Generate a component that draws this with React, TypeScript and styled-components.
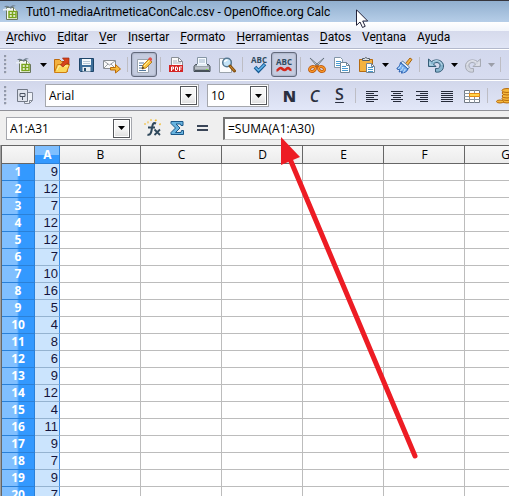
import React from 'react';
import styled, { createGlobalStyle, css } from 'styled-components';

const GlobalStyle = createGlobalStyle`
  *, *::before, *::after { box-sizing: border-box; }
  html, body { margin: 0; }
  body { font-family: "Open Sans", "Noto Sans", sans-serif; font-size: 12px; color: #000; }
  button, input, select { font: inherit; color: inherit; margin: 0; }
`;

const Window = styled.div`
  position: relative;
  display: flex;
  flex-direction: column;
  height: 100vh;
  overflow: hidden;
  background: #efefef;
`;

const TitleBar = styled.header`
  display: flex;
  flex: none;
  align-items: center;
  gap: 5px;
  height: 22px;
  padding-left: 3px;
  border-top: 1px solid #35353c;
  background: linear-gradient(#91afcf, #b6cee8);
`;

const Title = styled.h1`
  margin: 0;
  font-family: Roboto, sans-serif;
  font-size: 12px;
  line-height: 20px;
  font-weight: 400;
  white-space: nowrap;
`;

const MenuBar = styled.nav`
  display: flex;
  flex: none;
  gap: 11px;
  height: 27px;
  padding: 4px 6px 0;
  border-bottom: 1px solid #b3b9cc;
  background: linear-gradient(#fff 0, #f2f5fb 9px, #d6daec 9px, #e0e5f5 100%);
`;

const MenuItem = styled.button`
  padding: 0;
  border: 0;
  background: none;
  font-family: Roboto, sans-serif;
  line-height: 18px;
  white-space: nowrap;

  u { text-underline-offset: 2px; }
`;

const Toolbar = styled.div`
  display: flex;
  flex: none;
  align-items: center;
  height: 31px;
  border-top: 1px solid #fff;
  border-bottom: 1px solid #b4b9c9;
  background: linear-gradient(#d2d8ed, #d7dcf0);
`;

const FormatBar = styled(Toolbar)`
  background: linear-gradient(#d2d7eb, #e2e7f8);
  border-bottom-color: #8f9097;
`;

const Grip = styled.span`
  flex: none;
  width: 12px;
  height: 19px;
  background: radial-gradient(circle at 1px 1px, #9299ac 1px, #f8f9ff 2px, transparent 2px) 4px 0 / 4px 4px;
  background-repeat: repeat-y;
`;

const ToolButton = styled.button<{ $active?: boolean }>`
  display: flex;
  flex: none;
  align-items: center;
  justify-content: center;
  width: 25px;
  height: 25px;
  padding: 0;
  border: 0;
  background: none;

  ${p => p.$active && css`
    width: 26px;
    border: 1px solid #62697b;
    border-radius: 3px;
    background: #c5cce0;
    box-shadow: inset 0 0 2px #7c8499;
  `}

  svg { flex: none; }
`;

const MoreButton = styled(ToolButton)`
  width: 12px;
`;

const Separator = styled.span`
  flex: none;
  width: 1px;
  height: 15px;
  margin: 0 3px;
  background: #bdbdc4;
`;

const Combo = styled.span<{ $width: number }>`
  position: relative;
  flex: none;
  width: ${p => p.$width}px;
  height: 23px;
  border: 1px solid #a5a7ad;
  background: #fff;
`;

const FormatCombo = styled(Combo)`
  margin-left: 8px;
`;

const FormatGroup = styled.div`
  display: flex;
  align-items: center;
  margin-left: 8px;
`;

const Letter = styled.span<{ $variant: 'bold' | 'italic' | 'underline' }>`
  color: #2b3040;
  font-size: 16px;
  font-weight: 600;
  line-height: 24px;

  ${p => p.$variant === 'bold' && css`font-weight: 800;`}
  ${p => p.$variant === 'italic' && css`font-style: italic;`}
  ${p => p.$variant === 'underline' && css`
    line-height: 20px;
    padding-bottom: 4px;
    text-decoration: underline;
    text-decoration-thickness: 1px;
    text-underline-offset: 2px;
  `}
`;

const Select = styled.select`
  width: 100%;
  height: 100%;
  padding: 0 20px 0 3px;
  border: 0;
  border-radius: 0;
  outline: 0;
  appearance: none;
  background: transparent;
`;

const ComboArrow = styled.span`
  position: absolute;
  top: 1px;
  right: 1px;
  display: flex;
  align-items: center;
  justify-content: center;
  width: 17px;
  height: 19px;
  border: 1px solid #55575b;
  background: linear-gradient(#f6f6f6 50%, #dedede);
  box-shadow: inset 0 0 0 1px #fff;
  pointer-events: none;
`;

const FormulaBar = styled.div`
  display: flex;
  flex: none;
  align-items: center;
  height: 34px;
  padding-left: 6px;
  background: #efefef;
`;

const FormulaTools = styled.div`
  display: flex;
  flex: none;
  padding: 0 8px;
`;

const FormulaInput = styled.input`
  flex: 1;
  min-width: 0;
  height: 23px;
  padding: 0 3px;
  border: 1px solid #c8c8c8;
  border-top: 2px solid #747474;
  border-left: 2px solid #747474;
  border-right: 0;
  border-radius: 0;
  outline: 0;
  background: #fff;
`;

const Sheet = styled.main`
  flex: 1;
  min-height: 0;
  overflow: hidden;
  padding-left: 1px;
  background: #a0a0a0;
`;

const Grid = styled.table`
  width: 545px;
  min-width: 100%;
  table-layout: fixed;
  border-collapse: separate;
  border-spacing: 0;
  border-top: 1px solid #666;
  border-left: 1px solid #666;
  background: #fff;
`;

const Col = styled.col<{ $width: number }>`
  width: ${p => p.$width}px;
`;

const ColumnHead = styled.th<{ $selected?: boolean }>`
  height: 18px;
  padding: 0 0 0 1px;
  border-right: 1px solid #666;
  border-bottom: 1px solid #666;
  font-weight: 400;
  line-height: 17px;
  background: linear-gradient(#f7f7f7, #ececec);

  ${p => p.$selected && css`
    color: #fff;
    font-weight: 700;
    border-color: #2a80d8;
    background: linear-gradient(#7fbfff 9px, #3399ff 9px);
  `}
`;

const RowHead = styled.th`
  height: 17px;
  padding: 0;
  border-right: 1px solid #2a80d8;
  border-bottom: 1px solid #2a80d8;
  color: #fff;
  font-weight: 700;
  line-height: 16px;
  background: linear-gradient(90deg, #80bfff 15px, #3399ff 17px);
`;

const Cell = styled.td<{ $selected?: boolean }>`
  height: 17px;
  padding: 0;
  border-right: 1px solid #bcbcbc;
  border-bottom: 1px solid #bcbcbc;

  ${p => p.$selected && css`
    padding-right: 1px;
    border-right-color: #3c8fe8;
    border-bottom-color: #95b3d0;
    background: #cbe4fd;
    color: #14143c;
    font-family: "Liberation Sans", Arial, sans-serif;
    font-size: 13px;
    line-height: 16px;
    text-align: right;
  `}
`;

const Annotation = styled.svg`
  position: absolute;
  top: 136px;
  left: 276px;
  pointer-events: none;
`;

const Pointer = styled.svg`
  position: absolute;
  top: 9px;
  left: 356px;
  pointer-events: none;
`;

const Icon = ({ children, size = 18 }: { children: React.ReactNode; size?: number }) => (
  <svg width={size} height={size} viewBox={`0 0 ${size} ${size}`} fill="none" aria-hidden="true">
    {children}
  </svg>
);

const Caret = ({ color = '#000' }: { color?: string }) => (
  <svg width="7" height="4" viewBox="0 0 7 4" aria-hidden="true">
    <path d="M0 0h7L3.5 4z" fill={color} />
  </svg>
);

const SheetIcon = () => (
  <Icon>
    <path d="M3.5 4.5h7l4 4v8h-11z" fill="#f6f8f2" stroke="#69775c" />
    <path d="M10.5 4.5v4h4" fill="#fff" stroke="#69775c" />
    <path d="M6 8.5h7v6H6z" fill="#fff" stroke="#79a51d" strokeWidth="1.5" />
    <path d="M6 11.5h7M9.5 8v7" stroke="#79a51d" strokeWidth="1.5" />
    <path d="M1 4c2-2 4-1 6 0 2-2 4-2 6-1-3 0-4 1-5 3C6 4 4 4 1 4z" fill="#6f7e8d" />
    <path d="M0 7c2-1 3-1 5 0" stroke="#e8eef4" strokeWidth="1.5" />
  </Icon>
);

const FolderIcon = () => (
  <Icon>
    <path d="M1.5 15.5v-12h5l2 2h6v10z" fill="#f3b140" stroke="#bd6a0d" />
    <path d="M1.5 16.5l3-8h12l-3 8z" fill="#fbd75c" stroke="#cf7d12" />
    <path d="M4 14l2-4h9" stroke="#fff0a6" />
    <path d="M7.5 9l4-4.500L9.500 2H16v6.500L14 7l-4 4z" fill="#d8421b" stroke="#9d2a10" strokeWidth=".7" />
  </Icon>
);

const SaveIcon = () => (
  <Icon>
    <path d="M1.5 2.5h14v13h-13l-1-1z" fill="#3d6f9a" stroke="#1e4569" />
    <path d="M4 3h9v6H4z" fill="#f4f9fc" />
    <path d="M5 5.5h7M5 7.5h7" stroke="#b7c8d6" />
    <path d="M4.5 11h8v4.500h-8z" fill="#e6edf2" />
    <path d="M6 12h2v3H6z" fill="#23496b" />
  </Icon>
);

const MailIcon = () => (
  <Icon>
    <path d="M.5 4.5h12v8H.5z" fill="#fafafa" stroke="#888d94" />
    <path d="M1 5l5.500 4L12 5M1 12l4-4M12 12L8 8" stroke="#9a9da2" />
    <path d="M7.5 11.5h5v-3l5 4.500-5 4v-3h-5z" fill="#f7bb3b" stroke="#b96b0a" />
  </Icon>
);

const EditIcon = () => (
  <Icon>
    <path d="M2.5 3.5h11v13h-11z" fill="#fff" stroke="#9aa3ad" />
    <path d="M4 7h5M4 9.500h5M4 12h4M4 14.500h7" stroke="#53789d" />
    <path d="M7 13l1-4 6-6 3 3-6 6z" fill="#f7c441" stroke="#a8690c" strokeWidth=".8" />
    <path d="M13 3l1.500-1.500q1-.5 2 .5t.5 2L15.500 5.500z" fill="#e1524b" />
    <path d="M7 13l.6-2.400L9.300 12z" fill="#333" />
    <path d="M9 10l5.500-5.500" stroke="#fff0a1" />
  </Icon>
);

const PdfIcon = () => (
  <Icon>
    <path d="M3.5 1.5h7l4 4v10h-11z" fill="#fafafa" stroke="#8b9096" />
    <path d="M10.5 1.5v4h4" stroke="#8b9096" />
    <path d="M5 5h4M5 7h8" stroke="#a5b2be" />
    <path d="M1 9h14v7H1z" fill="#d42424" />
    <path d="M3.5 15v-4h2v2h-2M7.500 11v3.500H9l.5-1V12L9 11zM11.500 15v-4H14M11.500 13h2" stroke="#fff" />
  </Icon>
);

const PrintIcon = () => (
  <Icon>
    <path d="M4.5 1.5h9v8h-9z" fill="#f7fbff" stroke="#8696a5" />
    <path d="M6 4h6M6 6h6" stroke="#9db3c9" />
    <path d="M2.5 8.5h13l1.500 2v5H1v-5z" fill="#9ca4ab" stroke="#414b54" />
    <path d="M4 8h10v2H4z" fill="#e4edf5" />
    <path d="M2 11.5h14v1H2z" fill="#d8dde2" />
    <path d="M2 14h14v2H2z" fill="#48515a" />
    <path d="M13 13h2v1h-2z" fill="#7dd83c" />
  </Icon>
);

const PreviewIcon = () => (
  <Icon>
    <path d="M1.5 2.5h10l2 2v12h-12z" fill="#fafbfd" stroke="#9ba3ac" />
    <circle cx="9" cy="6.5" r="4.3" fill="#c4e3f7" stroke="#567892" strokeWidth="1.5" />
    <path d="M6.5 6q.5-2 3-2" stroke="#fff" strokeWidth="1.3" />
    <path d="M12 10l4.500 5" stroke="#85510f" strokeWidth="3" strokeLinecap="round" />
    <path d="M12.5 10.500l3.500 4" stroke="#d99236" strokeLinecap="round" />
  </Icon>
);

const AbcLetters = ({ y }: { y: number }) => (
  <text x="12" y={y} textAnchor="middle" fill="#304b60" fontFamily="Open Sans, sans-serif" fontSize="8" fontWeight="700">ABC</text>
);

const SpellIcon = () => (
  <Icon size={24}>
    <AbcLetters y={10} />
    <path d="M8 14l3.500 4L18 11" stroke="#185b94" strokeWidth="3.5" />
    <path d="M8.5 14.500l3 3 6-6" stroke="#66b8ed" strokeWidth="1.5" />
  </Icon>
);

const AutoSpellIcon = () => (
  <Icon size={24}>
    <AbcLetters y={12} />
    <path d="M4.5 17.500c2 0 2-2.500 4-2.500s2 2 4 2 2-2 3.500-2 1 2 3.500 2" stroke="#d4281c" strokeWidth="2.5" />
  </Icon>
);

const CutIcon = () => (
  <Icon>
    <path d="M2 2l9.500 8-1.500 1.500zM16 2l-9.500 8L8 11.500z" fill="#dce2e7" stroke="#606c77" strokeWidth=".8" />
    <path d="M9 9.500L6.500 12M9 9.500l2.500 2.500" stroke="#c9650d" strokeWidth="2" />
    <ellipse cx="4.5" cy="13" rx="3" ry="2.3" transform="rotate(-25 4.5 13)" stroke="#b9570a" strokeWidth="3" />
    <ellipse cx="13.5" cy="13" rx="3" ry="2.3" transform="rotate(25 13.5 13)" stroke="#b9570a" strokeWidth="3" />
    <ellipse cx="4.5" cy="13" rx="3" ry="2.3" transform="rotate(-25 4.5 13)" stroke="#f9962a" strokeWidth="1.5" />
    <ellipse cx="13.5" cy="13" rx="3" ry="2.3" transform="rotate(25 13.5 13)" stroke="#f9962a" strokeWidth="1.5" />
  </Icon>
);

const CopyIcon = () => (
  <Icon>
    <path d="M1.5 1.5h6l2 2v8h-8z" fill="#fff" stroke="#8296a8" />
    <path d="M3 5.5h5M3 7.5h5M3 9.5h5" stroke="#4a9bd0" />
    <path d="M7.5 6.5h6l3 3v7h-9z" fill="#fff" stroke="#718596" />
    <path d="M13.5 6.5v3h3" stroke="#718596" />
    <path d="M9 10.5h4M9 12.5h6M9 14.5h6" stroke="#4a9bd0" />
  </Icon>
);

const PasteIcon = () => (
  <Icon>
    <path d="M1.5 3.5h13v12h-13z" fill="#f5b33f" stroke="#b66b11" />
    <path d="M4.5 4.5v-2h2q1-2 3 0h2v2z" fill="#dce1e5" stroke="#535b63" />
    <path d="M8.5 7.5h5l3 3v6h-8z" fill="#fff" stroke="#718596" />
    <path d="M13.5 7.5v3h3" stroke="#718596" />
    <path d="M10 11.5h5M10 13.5h5M10 15.5h5" stroke="#4a9bd0" />
  </Icon>
);

const BrushIcon = () => (
  <Icon>
    <path d="M10.5 7.500l4.500-5.500 2 1.500-4.500 6z" fill="#f2b449" stroke="#a66410" />
    <path d="M7.5 5l7 6-1.500 2-7-6z" fill="#e6f0fa" stroke="#6082a3" />
    <path d="M5.5 6.500l7.500 6.500c-1 3-4 4-7 4 1-1 1-1 1-2l-3 1 1-2-3-1c-1-1 2.500-1 3.500-6.500z" fill="#75adeb" stroke="#285eb0" />
    <path d="M6 9c-1 3-2 3-3 4M8 11c0 2-2 4-3 4M10 13c0 2-1 3-2 3" stroke="#d3eaff" />
  </Icon>
);

const UndoIcon = ({ muted, flip }: { muted?: boolean; flip?: boolean }) => (
  <Icon>
    <g transform={flip ? 'translate(18 0) scale(-1 1)' : undefined}>
      <path
        d="M1.5 3v7.500H9L6.500 8c3-3 7-1 6.500 2-.3 2-2 3-4.500 2.500v3.500c5 1 8-2 8-6 0-5.500-7-8-12-4.500z"
        fill={muted ? '#d1d5df' : '#87b5cf'}
        stroke={muted ? '#a7abb5' : '#365d77'}
        strokeLinejoin="round"
      />
      <path d="M3 6v3h3M6 6c4-3 8-.5 9 3" stroke={muted ? '#e5e7ee' : '#c0deed'} />
    </g>
  </Icon>
);

const LinkIcon = () => (
  <Icon>
    <circle cx="9" cy="9" r="7.5" fill="#5d9fca" stroke="#265b82" />
    <path d="M2 9h14M9 2q-5 7 0 14M9 2q5 7 0 14" stroke="#c4e1f2" />
  </Icon>
);

const StylesIcon = () => (
  <Icon>
    <path d="M8.5 5.5h8v8l-3 3h-5z" fill="#eff2f8" stroke="#858b98" />
    <path d="M13.5 16.5v-3h3" stroke="#858b98" />
    <path d="M1.5 2.5h10v12h-10z" fill="#dfe3ec" stroke="#727986" />
    <path d="M4 9.5V6.500h5v3zM6.500 9.500V13" stroke="#4c5462" />
  </Icon>
);

type LineSet = [number, number][];
const alignments: { label: string; lines: LineSet }[] = [
  { label: 'Alinear a la izquierda', lines: [[3, 12], [3, 8], [3, 12], [3, 8], [3, 12], [3, 8]] },
  { label: 'Centrado', lines: [[3, 12], [5, 8], [3, 12], [5, 8], [3, 12], [5, 8]] },
  { label: 'Alinear a la derecha', lines: [[3, 12], [7, 8], [3, 12], [7, 8], [3, 12], [7, 8]] },
  { label: 'Justificado', lines: [[3, 12], [3, 12], [3, 12], [3, 12], [3, 12], [3, 12]] },
];

const AlignIcon = ({ lines }: { lines: LineSet }) => (
  <Icon>
    {lines.map(([x, w], i) => (
      <rect key={i} x={x} y={4 + i * 2} width={w} height="1" fill="#252a38" />
    ))}
  </Icon>
);

const MergeIcon = () => (
  <Icon>
    <path d="M1.5 3.5h15v12h-15z" fill="#fff" stroke="#707984" />
    <path d="M1 6.5h16M1 9.5h16M1 12.5h16M6.500 3v13M11.500 3v13" stroke="#8a949e" />
    <path d="M6.5 6.5h10v3h-10z" fill="#ffd44b" stroke="#e58a12" />
  </Icon>
);

const CoinsIcon = () => (
  <Icon>
    <g fill="#f6b93d" stroke="#b66a0d">
      <ellipse cx="12" cy="14" rx="5" ry="2" />
      <ellipse cx="12" cy="11.5" rx="5" ry="2" />
      <ellipse cx="12" cy="9" rx="5" ry="2" />
      <ellipse cx="12" cy="6" rx="5" ry="2" />
      <ellipse cx="12" cy="3.5" rx="5" ry="2" />
      <ellipse cx="5" cy="14.5" rx="3.5" ry="1.5" />
    </g>
  </Icon>
);

const FunctionIcon = () => (
  <Icon>
    <path d="M12 4.500C9 3 8.500 6 8 9c-.6 4-1.500 8-4.500 6.500M4 8.500h7" stroke="#2f485b" strokeWidth="2" />
    <path d="M10.5 10.500l5.500 5.500M16 10.500L10.500 16" stroke="#2f485b" strokeWidth="1.8" />
    <path d="M3 2l1 1 1-1-1 3zM7 0l1 1-1 1-1-1zM12 0l1 1.500-1.500 1-1-1zM16 4l1 1-1 1.500-1-1zM1 4l1 1-1 1-1-1z" fill="#f1ba25" />
  </Icon>
);

const SumIcon = () => (
  <Icon>
    <path d="M2 2.500h12v4h-2l-.5-1.500H7l4 4-4.500 4.500H12l.5-2h2v4H2v-2L6.500 9 2 4.500z" fill="#67b3df" stroke="#1b5787" strokeLinejoin="round" />
  </Icon>
);

const EqualsIcon = () => (
  <Icon><path d="M3 7h11M3 11h11" stroke="#3a4557" strokeWidth="2" /></Icon>
);

const menus: [string, string, string][] = [
  ['', 'A', 'rchivo'], ['', 'E', 'ditar'], ['', 'V', 'er'], ['', 'I', 'nsertar'], ['', 'F', 'ormato'],
  ['', 'H', 'erramientas'], ['', 'D', 'atos'], ['Ve', 'n', 'tana'], ['Ay', 'u', 'da'],
];
const values = [9, 12, 7, 12, 12, 7, 10, 16, 5, 4, 8, 6, 9, 12, 4, 11, 9, 7, 9, 7];
const columns = ['B', 'C', 'D', 'E', 'F', 'G'];

const Tool = ({ label, active, children }: { label: string; active?: boolean; children: React.ReactNode }) => (
  <ToolButton type="button" aria-label={label} aria-pressed={active} $active={active}>{children}</ToolButton>
);
const More = ({ label, color }: { label: string; color?: string }) => (
  <MoreButton type="button" aria-label={label}><Caret color={color} /></MoreButton>
);

export default function App() {
  return (
    <Window>
      <GlobalStyle />
      <TitleBar>
        <SheetIcon />
        <Title>Tut01-mediaAritmeticaConCalc.csv - OpenOffice.org Calc</Title>
      </TitleBar>
      <MenuBar>
        {menus.map(([before, key, after]) => (
          <MenuItem type="button" key={key + after}>{before}<u>{key}</u>{after}</MenuItem>
        ))}
      </MenuBar>
      <Toolbar role="toolbar" aria-label="Estándar">
        <Grip />
        <Tool label="Nuevo"><SheetIcon /></Tool>
        <More label="Más tipos de documento" />
        <Tool label="Abrir"><FolderIcon /></Tool>
        <Tool label="Guardar"><SaveIcon /></Tool>
        <Tool label="Enviar por correo"><MailIcon /></Tool>
        <Separator />
        <Tool label="Editar archivo" active><EditIcon /></Tool>
        <Separator />
        <Tool label="Exportar a PDF"><PdfIcon /></Tool>
        <Tool label="Imprimir"><PrintIcon /></Tool>
        <Tool label="Vista preliminar"><PreviewIcon /></Tool>
        <Separator />
        <Tool label="Ortografía"><SpellIcon /></Tool>
        <Tool label="Revisión automática" active><AutoSpellIcon /></Tool>
        <Separator />
        <Tool label="Cortar"><CutIcon /></Tool>
        <Tool label="Copiar"><CopyIcon /></Tool>
        <Tool label="Pegar"><PasteIcon /></Tool>
        <More label="Opciones de pegado" />
        <Tool label="Copiar formato"><BrushIcon /></Tool>
        <Separator />
        <Tool label="Deshacer"><UndoIcon /></Tool>
        <More label="Historial de deshacer" />
        <Tool label="Restaurar"><UndoIcon muted flip /></Tool>
        <More label="Historial de restaurar" color="#9b9ea8" />
        <Separator />
        <Tool label="Hiperenlace"><LinkIcon /></Tool>
      </Toolbar>
      <FormatBar role="toolbar" aria-label="Formato">
        <Grip />
        <Tool label="Estilo y formato"><StylesIcon /></Tool>
        <FormatCombo $width={154}>
          <Select aria-label="Nombre de fuente"><option>Arial</option></Select>
          <ComboArrow><Caret /></ComboArrow>
        </FormatCombo>
        <FormatCombo $width={62}>
          <Select aria-label="Tamaño de fuente"><option>10</option></Select>
          <ComboArrow><Caret /></ComboArrow>
        </FormatCombo>
        <FormatGroup>
          <Tool label="Negrita"><Letter $variant="bold">N</Letter></Tool>
          <Tool label="Cursiva"><Letter $variant="italic">C</Letter></Tool>
          <Tool label="Subrayado"><Letter $variant="underline">S</Letter></Tool>
          <Separator />
          {alignments.map(a => <Tool key={a.label} label={a.label}><AlignIcon lines={a.lines} /></Tool>)}
          <Tool label="Combinar celdas"><MergeIcon /></Tool>
          <Separator />
          <Tool label="Moneda"><CoinsIcon /></Tool>
        </FormatGroup>
      </FormatBar>
      <FormulaBar>
        <Combo $width={126}>
          <Select aria-label="Cuadro de nombre"><option>A1:A31</option></Select>
          <ComboArrow><Caret /></ComboArrow>
        </Combo>
        <FormulaTools>
          <Tool label="Asistente de funciones"><FunctionIcon /></Tool>
          <Tool label="Suma"><SumIcon /></Tool>
          <Tool label="Función"><EqualsIcon /></Tool>
        </FormulaTools>
        <FormulaInput aria-label="Línea de entrada" defaultValue="=SUMA(A1:A30)" />
      </FormulaBar>
      <Sheet>
        <Grid>
          <colgroup>
            <Col $width={33} />
            <Col $width={25} />
            {columns.map(c => <Col key={c} $width={81} />)}
          </colgroup>
          <thead>
            <tr>
              <ColumnHead as="td" />
              <ColumnHead scope="col" $selected>A</ColumnHead>
              {columns.map(c => <ColumnHead key={c} scope="col">{c}</ColumnHead>)}
            </tr>
          </thead>
          <tbody>
            {values.map((v, i) => (
              <tr key={i}>
                <RowHead scope="row">{i + 1}</RowHead>
                <Cell $selected>{v}</Cell>
                {columns.map(c => <Cell key={c} />)}
              </tr>
            ))}
          </tbody>
        </Grid>
      </Sheet>
      <Annotation width="144" height="326" viewBox="0 0 144 326" aria-hidden="true">
        <path d="M14 23L139 320" stroke="#ed1c24" strokeWidth="5" strokeLinecap="round" />
        <path d="M5 1l19 20L5 29z" fill="#ed1c24" />
      </Annotation>
      <Pointer width="13" height="20" viewBox="0 0 13 20" aria-hidden="true">
        <path d="M.5.8v15.500l3.500-3.300 2.500 5.500 2.700-1.200-2.500-5.300h5z" fill="#fff" stroke="#22223a" />
      </Pointer>
    </Window>
  );
}
